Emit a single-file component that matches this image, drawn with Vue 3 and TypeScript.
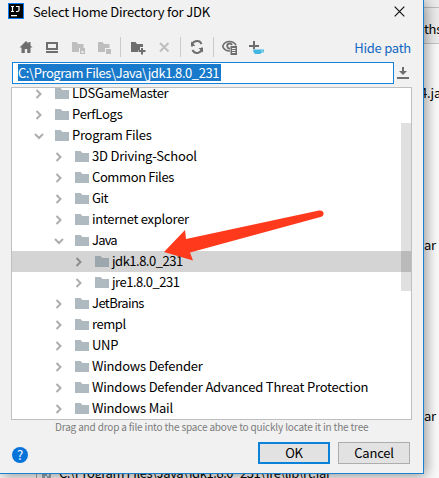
<script setup lang="ts">
interface Entry {
  name: string
  depth: 0 | 1 | 2
  tracking: number
  open?: boolean
  selected?: boolean
}

const entries: Entry[] = [
  { name: 'LDSGameMaster', depth: 0, tracking: -0.27 },
  { name: 'PerfLogs', depth: 0, tracking: -0.25 },
  { name: 'Program Files', depth: 0, tracking: -0.27, open: true },
  { name: '3D Driving-School', depth: 1, tracking: -0.2 },
  { name: 'Common Files', depth: 1, tracking: -0.4 },
  { name: 'Git', depth: 1, tracking: -0.5 },
  { name: 'internet explorer', depth: 1, tracking: -0.28 },
  { name: 'Java', depth: 1, tracking: -0.8, open: true },
  { name: 'jdk1.8.0_231', depth: 2, tracking: -0.5, selected: true },
  { name: 'jre1.8.0_231', depth: 2, tracking: -0.5 },
  { name: 'JetBrains', depth: 1, tracking: -0.58 },
  { name: 'rempl', depth: 1, tracking: -0.45 },
  { name: 'UNP', depth: 1, tracking: -0.3 },
  { name: 'Windows Defender', depth: 1, tracking: -0.2 },
  { name: 'Windows Defender Advanced Threat Protection', depth: 1, tracking: -0.2 },
  { name: 'Windows Mail', depth: 1, tracking: -0.2 },
]
</script>

<template>
  <div class="screen">
    <div class="behind">
      <div class="behind-tab">ths</div>
      <span class="peek peek-a">4.ja</span>
      <span class="peek peek-b">ar</span>
      <span class="peek peek-c">ar</span>
      <div class="behind-row">
        <svg width="9" height="14" viewBox="0 0 9 14"><path d="M0 0h9v14H0z" fill="#9aa7b0" /><path d="M3 6h2v2H3zM5 8h2v2H5zM3 10h2v2H3z" fill="#dff4ff" /></svg>
        <span>C:\Program Files\Java\jdk1.8.0_231\jre\lib\rt.jar</span>
      </div>
    </div>

    <section class="dialog">
      <header class="title">
        <svg width="16" height="16" viewBox="0 0 16 16">
          <path d="M0 0h16v16H0z" fill="#087cfa" /><path d="M1 1h14v14H1z" fill="#050505" />
          <path d="M3 3.500h3M4.500 3.500v5M3 8.500h3M8 3.500h3v3.500q0 1.500-1.500 1.500H8" fill="none" stroke="#fff" stroke-width="1.200" />
          <path d="M3 12h6v1.300H3z" fill="#fff" />
        </svg>
        <span class="title-text">Select Home Directory for JDK</span>
        <svg class="close" width="11" height="11" viewBox="0 0 11 11"><path d="M.7.700l9.600 9.600M10.300.700.700 10.300" stroke="#111" stroke-width="1.200" /></svg>
      </header>

      <div class="toolbar">
        <svg class="ico" viewBox="0 0 16 16"><path d="M8 2 1.500 8.500h2V14h3.300v-4h2.400v4h3.300V8.500h2L12.500 6.400V3h-2v1.500z" fill="#6e6e6e" /></svg>
        <svg class="ico" viewBox="0 0 16 16"><path d="M3 4h10v6H3z" fill="none" stroke="#6e6e6e" stroke-width="2" /><path d="M2 12h12v2H2z" fill="#6e6e6e" /></svg>
        <svg class="ico" viewBox="0 0 16 16"><path d="M2 3h4.500L8 5h5.500v4H9v4H2z" fill="#bebebe" /><path d="M10 9h5v6h-5z" fill="#bebebe" /><path d="M11.500 12h2v2h-2z" fill="#f2f2f2" /></svg>
        <svg class="ico" viewBox="0 0 16 16"><path d="M2 3h4.500L8 5h5.500v4H9v4H2z" fill="#bebebe" /><path d="M10 10h5v5h-5z" fill="#bebebe" /></svg>
        <i class="sep"></i>
        <svg class="ico" viewBox="0 0 16 16"><path d="M1 3h4.500L7 5h6v3h-3v3H8v2H1z" fill="#6e6e6e" /><path d="M11 9h2v2h2.500v2H13v2.500h-2V13H8.500v-2H11z" fill="#6e6e6e" /></svg>
        <svg class="ico" viewBox="0 0 16 16"><path d="m4 4 8.500 8.500m0-8.500L4 12.500" stroke="#bebebe" stroke-width="2" /></svg>
        <i class="sep"></i>
        <svg class="ico" viewBox="0 0 16 16"><path d="M3 7.500A5 5 0 0 1 12.500 5M13 8.500A5 5 0 0 1 3.500 11" fill="none" stroke="#6e6e6e" stroke-width="2" /><path d="M2 2.500V7h4.500zM14 13.500V9H9.500z" fill="#6e6e6e" /></svg>
        <i class="sep"></i>
        <svg class="ico" viewBox="0 0 16 16"><path d="M8 12C3.500 12 1 9 .7 7.200 2 4 4.500 2.500 7.500 2.500S13 4 14 6.500" fill="none" stroke="#6e6e6e" stroke-width="1.600" /><path d="M8 9.500A2.500 2.500 0 1 1 10 6" fill="none" stroke="#6e6e6e" stroke-width="1.800" /><path d="M8.500 7H15v9H8.500z" fill="#6e6e6e" /><path d="M10 9.500h3.500M10 11.500h3.500M10 13.500h3.500" stroke="#f2f2f2" /></svg>
        <svg class="ico" viewBox="0 0 16 16"><path d="M5 2h2v4h4v2H7v2H5V8H1V6h4z" fill="#6e6e6e" /><path d="M5 10.500h11v1.700q0 1.500-2.500 1.500L12 15H7q-2-1.500-2-4.500z" fill="#40b6e0" /><path d="M13.500 11.500h1.500v1h-1.500z" fill="#f2f2f2" /></svg>
        <a class="hide-path">Hide path</a>
      </div>

      <div class="path-line">
        <div class="path-box"><span class="picked">C:\Program Files\Java\jdk1.8.0_231</span></div>
        <svg width="12" height="12" viewBox="0 0 12 12"><path d="M5 0h2v4h3L6 8 2 4h3zM0 10h12v2H0z" fill="#6e6e6e" /></svg>
      </div>

      <div class="tree">
        <ul>
          <li v-for="e in entries" :key="e.name" :class="['d' + e.depth, { selected: e.selected }]">
            <svg class="chev" width="10" height="10" viewBox="0 0 10 10">
              <path :d="e.open ? 'M1 3 5 7l4-4' : 'M2.500 1l4 4-4 4'" fill="none" :stroke="e.selected ? '#8c8c8c' : '#adadad'" stroke-width="2" />
            </svg>
            <svg class="folder" width="14" height="11" viewBox="0 0 14 11"><path d="M0 0h5.500L7.500 2H14v9H0z" :fill="e.selected ? '#9ca6ad' : '#aeb9c0'" /></svg>
            <span class="name" :style="{ letterSpacing: e.tracking + 'px' }">{{ e.name }}</span>
          </li>
        </ul>
        <div class="thumb"></div>
      </div>

      <p class="hint">Drag and drop a file into the space above to quickly locate it in the tree</p>

      <footer class="actions">
        <span class="help">?</span>
        <button class="btn primary">OK</button>
        <button class="btn">Cancel</button>
      </footer>

      <svg class="arrow" width="162" height="56" viewBox="0 0 162 56"><path d="M1 42 22 20l1 9L156 .5q4-.5 4.500 2.500t-3 4L27 42.500l3 8z" fill="#ff3a1c" /></svg>
    </section>
  </div>
</template>

<style>
body { overflow: hidden; }
</style>

<style scoped>
.screen {
  position: relative;
  width: 439px;
  height: 478px;
  overflow: hidden;
  background: #fafafa;
  color: #000;
  font: 13px/21px "Noto Sans CJK SC", "Noto Sans", sans-serif;
  white-space: nowrap;
}
.behind { position: absolute; inset: 0; }
.behind-tab {
  box-sizing: border-box;
  height: 44px;
  padding: 11px 0 0 424px;
  border-bottom: 1px solid #c4c4c4;
  background: linear-gradient(#ececec 7px, #bdbdbd 7px, #bdbdbd 8px, #ececec 8px);
  line-height: 36px;
  letter-spacing: -.3px;
}
.peek { position: absolute; left: 424px; letter-spacing: -.3px; }
.peek-a { top: 82px; left: 420px; }
.peek-b { top: 234px; }
.peek-c { top: 405px; }
.behind-row {
  position: absolute;
  left: 36px;
  top: 462px;
  display: flex;
  align-items: center;
  gap: 8px;
  padding-left: 5px;
  border-left: 1px solid #aaa;
  letter-spacing: -.43px;
}
.dialog {
  position: relative;
  box-sizing: border-box;
  width: 424px;
  height: 474px;
  padding: 0 12px 0 11px;
  border: solid #1a80d2;
  border-width: 0 1px 1px 0;
  background: #f1f1f1;
  box-shadow: 2px 2px 13px rgba(0, 0, 0, .42);
}
.title { display: flex; align-items: center; height: 23px; margin-left: -3px; }
.title > svg:first-child { margin-top: -1px; }
.title-text { margin: -1px 0 0 9px; letter-spacing: -.2px; }
.close { margin: -1px 6px 0 auto; }
.toolbar { box-sizing: border-box; display: flex; align-items: center; height: 39px; padding: 9px 0 0 7px; }
.ico { flex: none; width: 16px; height: 16px; margin-right: 10px; }
.sep { width: 1px; height: 20px; margin: 0 9px 0 -2px; background: #cbcbcb; }
.sep ~ .sep { margin: 0 8px 0 -2px; }
.hide-path { margin-left: auto; color: #1268c3; letter-spacing: -.25px; }
.path-line { display: flex; align-items: center; gap: 3px; height: 22px; padding-left: 1px; }
.path-box {
  box-sizing: border-box;
  width: 382px;
  height: 22px;
  padding: 1px 5px;
  border: 1px solid #1683d8;
  background: #fff;
}
.picked {
  display: block;
  width: 203px;
  height: 17px;
  background: #1979ca;
  color: #fff;
  line-height: 17px;
  letter-spacing: -.44px;
}
.tree {
  position: relative;
  box-sizing: border-box;
  width: 401px;
  height: 333px;
  margin-top: 3px;
  overflow: hidden;
  border: 1px solid #bfbfbf;
  background: #fff;
}
ul { margin: -5px 0 0; padding: 0; list-style: none; }
li { display: flex; align-items: center; height: 21px; }
.d0 { padding-left: 22px; }
.d1 { padding-left: 42px; }
.d2 { padding-left: 62px; }
.selected { background: #d4d4d4; }
.folder { margin: 0 3px 0 11px; }
.name { margin-top: -2px; }
.thumb { position: absolute; right: 0; top: 35px; width: 10px; height: 168px; background: rgba(0, 0, 0, .12); }
.hint { margin: 0 0 0 44px; height: 14px; color: #7c7c7c; font-size: 10px; line-height: 14px; letter-spacing: -.17px; }
.actions { display: flex; align-items: center; gap: 8px; height: 38px; padding: 0 1px; }
.help {
  width: 16px;
  height: 16px;
  margin: 3px auto 0 0;
  border-radius: 50%;
  background: #0874d9;
  color: #fff;
  line-height: 16px;
  text-align: center;
}
.btn {
  box-sizing: border-box;
  width: 72px;
  height: 22px;
  padding: 0;
  border: 1px solid #adadad;
  background: #e2e2e2;
  color: #000;
  font: inherit;
  line-height: 18px;
  letter-spacing: -.2px;
}
.primary { border: 2px solid #0b82da; line-height: 16px; }
.arrow { position: absolute; left: 163px; top: 210px; }
</style>
